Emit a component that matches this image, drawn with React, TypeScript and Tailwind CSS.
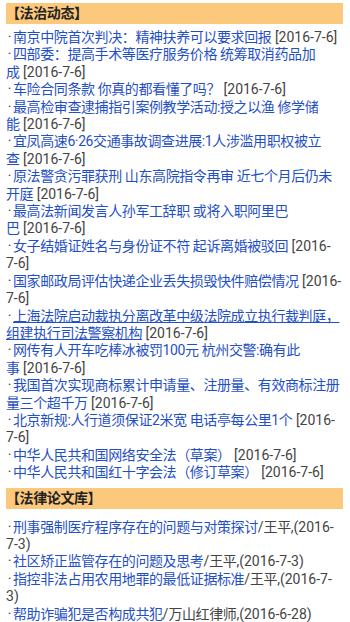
import React from "react";

type Item = { title: string; date: string; underline?: boolean };

const news: Item[] = [
  { title: "南京中院首次判决：精神扶养可以要求回报", date: "2016-7-6" },
  { title: "四部委：提高手术等医疗服务价格 统筹取消药品加成", date: "2016-7-6" },
  { title: "车险合同条款 你真的都看懂了吗？", date: "2016-7-6" },
  { title: "最高检审查逮捕指引案例教学活动:授之以渔 修学储能", date: "2016-7-6" },
  { title: "宜凤高速6·26交通事故调查进展:1人涉滥用职权被立查", date: "2016-7-6" },
  { title: "原法警贪污罪获刑 山东高院指令再审 近七个月后仍未开庭", date: "2016-7-6" },
  { title: "最高法新闻发言人孙军工辞职 或将入职阿里巴巴", date: "2016-7-6" },
  { title: "女子结婚证姓名与身份证不符 起诉离婚被驳回", date: "2016-7-6" },
  { title: "国家邮政局评估快递企业丢失损毁快件赔偿情况", date: "2016-7-6" },
  {
    title: "上海法院启动裁执分离改革中级法院成立执行裁判庭，组建执行司法警察机构",
    date: "2016-7-6",
    underline: true,
  },
  { title: "网传有人开车吃棒冰被罚100元 杭州交警:确有此事", date: "2016-7-6" },
  { title: "我国首次实现商标累计申请量、注册量、有效商标注册量三个超千万", date: "2016-7-6" },
  { title: "北京新规:人行道须保证2米宽 电话亭每公里1个", date: "2016-7-6" },
  { title: "中华人民共和国网络安全法（草案）", date: "2016-7-6" },
  { title: "中华人民共和国红十字会法（修订草案）", date: "2016-7-6" },
];

const papers = [
  { title: "刑事强制医疗程序存在的问题与对策探讨", author: "王平", date: "2016-7-3" },
  { title: "社区矫正监管存在的问题及思考", author: "王平", date: "2016-7-3" },
  { title: "指控非法占用农用地罪的最低证据标准", author: "王平", date: "2016-7-3" },
  { title: "帮助诈骗犯是否构成共犯", author: "万山红律师", date: "2016-6-28" },
];

function Dot() {
  return <span className="inline-block w-[7px] text-center text-[#444]">·</span>;
}

function Header({ text }: { text: string }) {
  return (
    <div className="h-[21px] bg-[#fcc87c] font-bold text-[14px] leading-[21px] text-[#222] tracking-[-0.4px]">
      {text}
    </div>
  );
}

export default function App() {
  return (
    <div
      className="w-[350px] bg-white pl-[6px] pr-[7px] pt-[3px] text-[14px] leading-[17.4px] text-[#444]"
      style={{ fontFamily: 'Roboto, "Noto Sans CJK SC", sans-serif' }}
    >
      <Header text="【法治动态】" />
      <div className="mt-[5px] mb-[6px]">
        {news.map((n, i) => {
          const [y, ...rest] = n.date.split("-");
          return (
            <div key={i}>
              <Dot />
              <a
                className={
                  "text-[#1f50c6] tracking-[-0.4px] " + (n.underline ? "underline" : "no-underline")
                }
              >
                {n.title}
              </a>
              <span>
                {"\u00a0[" + y + "-"}
                <wbr />
                <span className="whitespace-nowrap">{rest.join("-") + "]"}</span>
              </span>
            </div>
          );
        })}
      </div>
      <Header text="【法律论文库】" />
      <div className="mt-[10px]">
        {papers.map((p, i) => {
          const parts = p.date.split("-");
          return (
            <div key={i}>
              <Dot />
              <a className="text-[#1f50c6] tracking-[-0.4px]">{p.title}</a>
              <span>
                /<span className="tracking-[-0.4px]">{p.author}</span>,(
                {parts[0]}-<wbr />
                {parts[1]}-<wbr />
                {parts[2]})
              </span>
            </div>
          );
        })}
      </div>
    </div>
  );
}
